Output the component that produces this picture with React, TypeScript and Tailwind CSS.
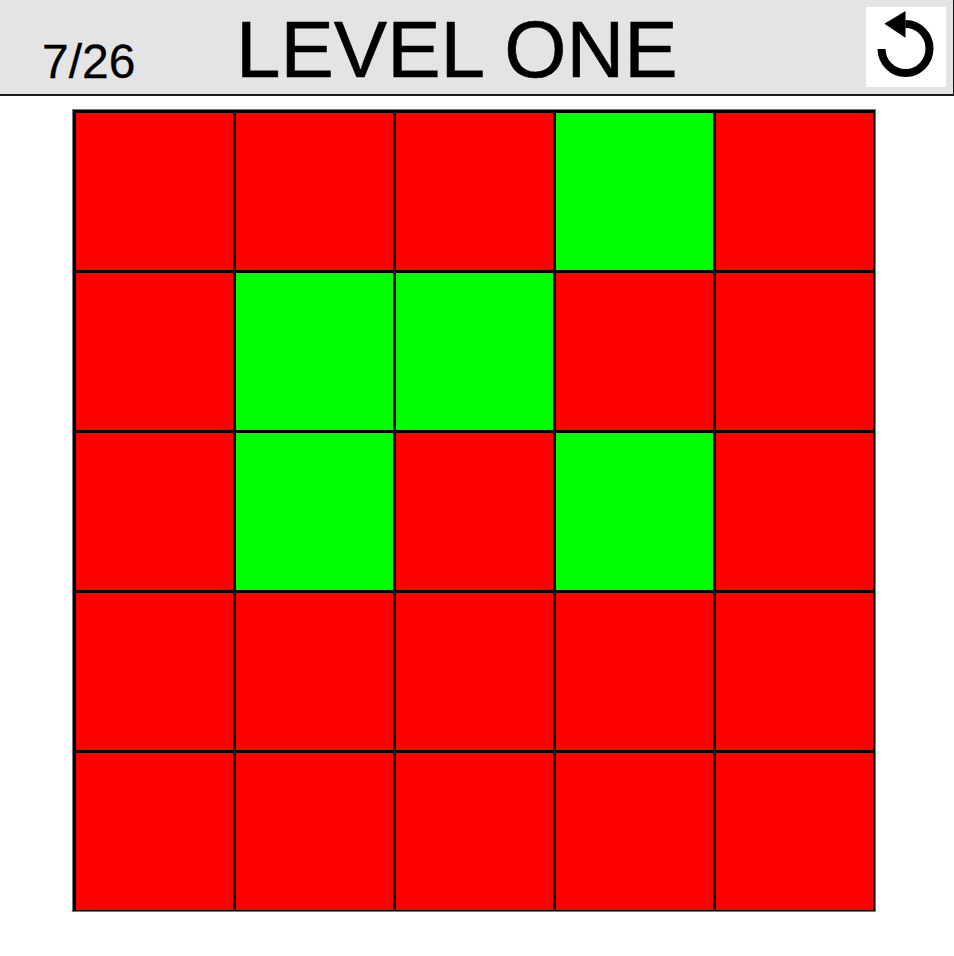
const greenCells = [3, 6, 7, 11, 13]

function ResetIcon() {
  return (
    <svg width="80" height="80" viewBox="0 0 80 80" fill="none">
      <path d="M15.5 42 A24 24.5 0 1 0 39.5 17" stroke="#000" strokeWidth="8" />
      <path d="M18.3 16.7 L39.5 4 L39.5 30.7 Z" fill="#000" />
    </svg>
  )
}

export default function App() {
  return (
    <div className="h-[956px] w-[954px] bg-white font-['Liberation_Sans',Arial,sans-serif] text-black">
      <header className="flex h-24 items-start border-r border-b-2 border-[#1a1a1a] bg-[#e4e4e4]">
        <div className="mt-[37px] ml-[42px] w-[194px] text-[48px] leading-[50px] [-webkit-text-stroke:0.3px_black]">7/26</div>
        <h1 className="mt-[5px] text-[80px] leading-[90px] [-webkit-text-stroke:0.6px_black]">LEVEL ONE</h1>
        <button className="mt-[7px] ml-auto mr-[7px] h-20 w-20 bg-white">
          <ResetIcon />
        </button>
      </header>

      <main className="mt-[13px] ml-[72px] grid w-[804px] grid-cols-5 gap-[3px] border border-[#777] bg-black pt-[3px] pr-[2px] pb-[1px] pl-[3px]">
        {Array.from({ length: 25 }, (_, i) => (
          <div
            key={i}
            className={`h-[157px] ${greenCells.includes(i) ? "bg-[#00ff00]" : "bg-[#ff0000]"}`}
          />
        ))}
      </main>
    </div>
  )
}
